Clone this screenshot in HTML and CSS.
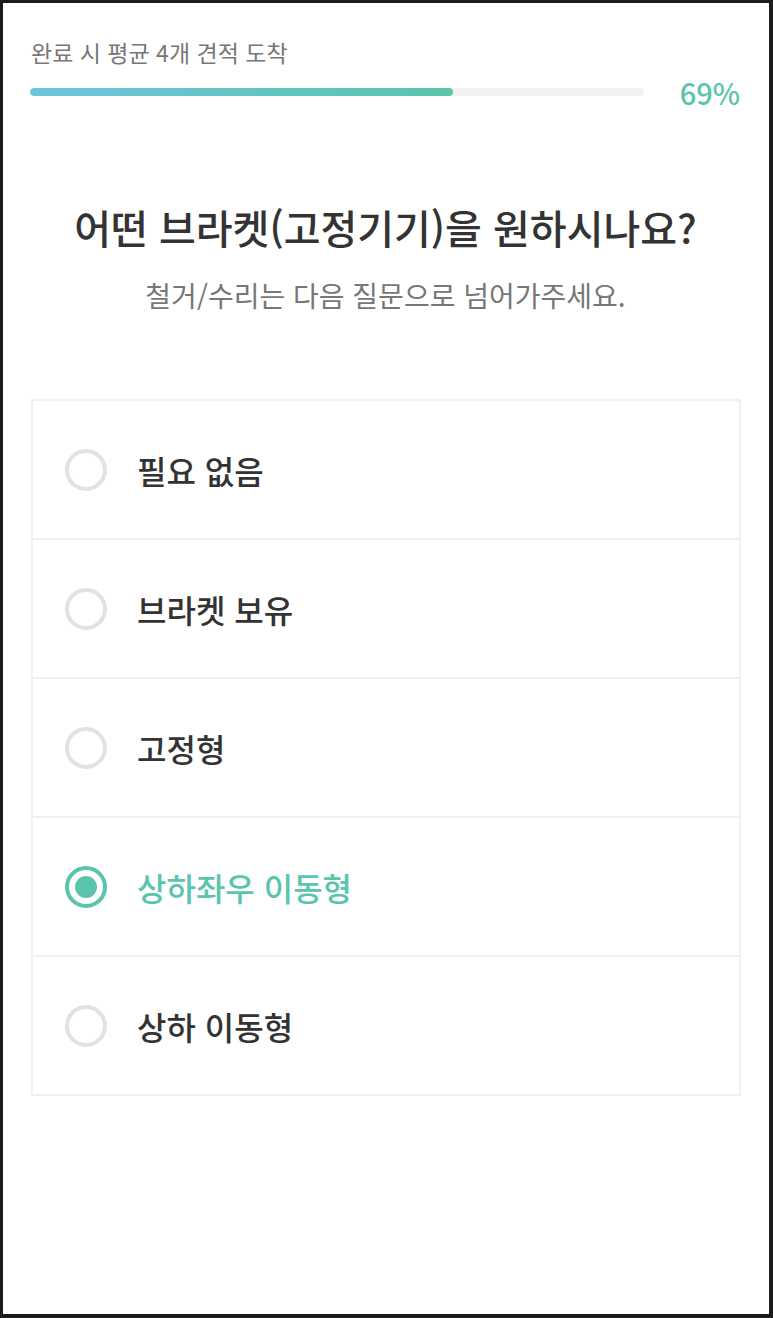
FILE: index.html
```html
<!DOCTYPE html>
<html lang="ko">
<head>
    <meta charset="UTF-8">
    <title>브라켓 선택</title>
    <link rel="stylesheet" href="styles.css">
</head>
<body>
    <div class="screen">
        <div class="progress">
            <p class="progress-label">완료 시 평균 4개 견적 도착</p>
            <div class="progress-row">
                <div class="progress-track">
                    <div class="progress-fill" style="width: 69%"></div>
                </div>
                <span class="progress-percent">69%</span>
            </div>
        </div>

        <h1 class="question">어떤 브라켓(고정기기)을 원하시나요?</h1>
        <p class="hint">철거/수리는 다음 질문으로 넘어가주세요.</p>

        <ul class="options">
            <li class="option"><span class="radio"></span>필요 없음</li>
            <li class="option"><span class="radio"></span>브라켓 보유</li>
            <li class="option"><span class="radio"></span>고정형</li>
            <li class="option selected"><span class="radio"></span>상하좌우 이동형</li>
            <li class="option"><span class="radio"></span>상하 이동형</li>
        </ul>
    </div>
</body>
</html>
```

FILE: styles.css
```css
body {
    margin: 0;
    background-color: #1c1c1c;
    font-family: "Noto Sans CJK KR", "Noto Sans", sans-serif;
}

.screen {
    margin: 3px 4px 4px 3px;
    height: 1311px;
    padding: 36px 28px 0 27px;
    box-sizing: border-box;
    background-color: #fff;
}

.progress-label {
    margin: 0 0 0 1px;
    font-size: 23px;
    line-height: 26px;
    color: #777;
}

.progress-row {
    display: flex;
    align-items: center;
    gap: 36px;
    margin-top: 12px;
}

.progress-track {
    flex: 1;
    height: 8px;
    border-radius: 4px;
    background-color: #f2f2f2;
    overflow: hidden;
}

.progress-fill {
    height: 100%;
    border-radius: 4px;
    background: linear-gradient(to right, #6dc4de, #5ac5ab);
}

.progress-percent {
    font-size: 29px;
    font-weight: 500;
    color: #5bc4ad;
    line-height: 30px;
    margin-right: 1px;
}

.question {
    margin: 97px 0 0;
    text-align: center;
    font-size: 40px;
    font-weight: 500;
    line-height: 46px;
    color: #333;
}

.hint {
    margin: 29px 0 0;
    text-align: center;
    font-size: 28px;
    line-height: 32px;
    color: #777;
}

.options {
    list-style: none;
    margin: 88px 0 0 1px;
    padding: 0;
    border: 2px solid #f0f0f0;
}

.option {
    display: flex;
    align-items: center;
    height: 137px;
    padding-left: 32px;
    font-size: 32px;
    font-weight: 500;
    color: #333;
}

.option + .option {
    border-top: 2px solid #f0f0f0;
}

.radio {
    width: 42px;
    height: 42px;
    box-sizing: border-box;
    border: 4px solid #e2e2e2;
    border-radius: 50%;
    margin-right: 30px;
    display: flex;
    align-items: center;
    justify-content: center;
}

.selected {
    color: #5bc4ad;
}

.selected .radio {
    border-color: #5bc4ad;
}

.selected .radio::after {
    content: "";
    width: 22px;
    height: 22px;
    border-radius: 50%;
    background-color: #5bc4ad;
}
```
